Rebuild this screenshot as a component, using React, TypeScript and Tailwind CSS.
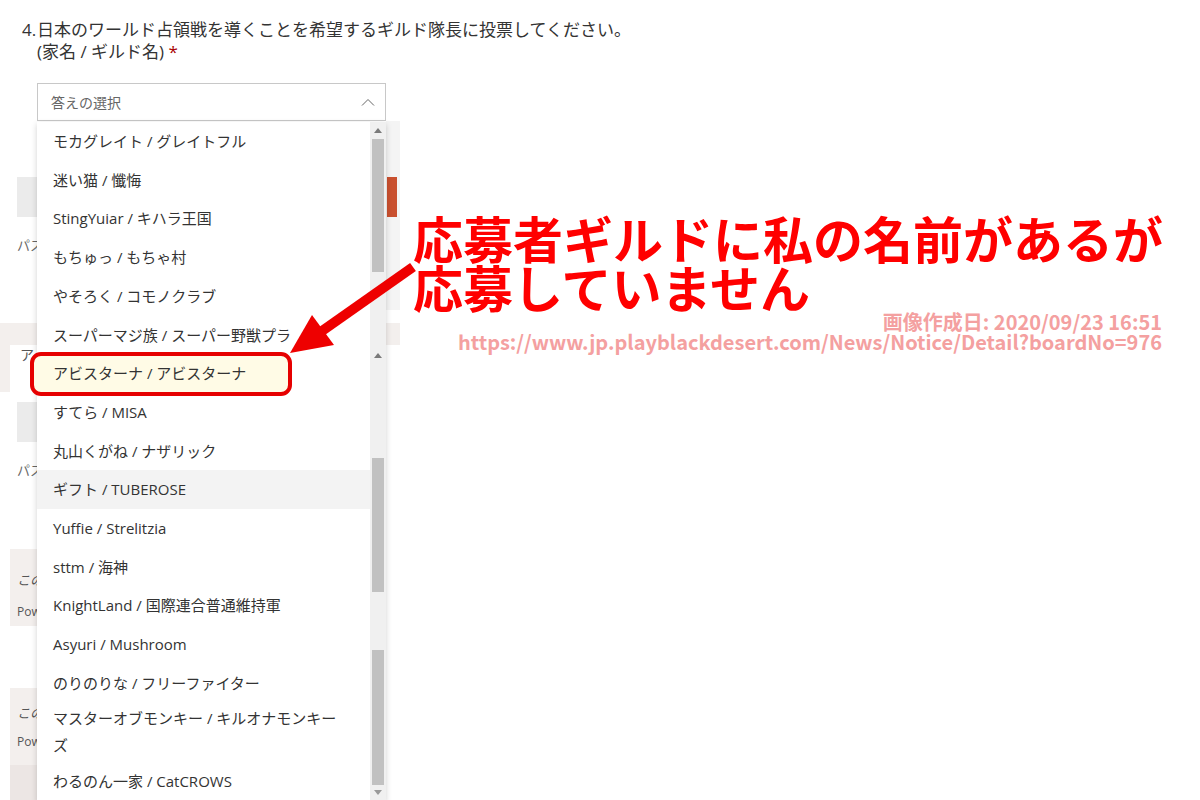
import React from "react";

const items: { label: React.ReactNode; tall?: boolean; hover?: boolean; mark?: boolean }[] = [
  { label: "モカグレイト / グレイトフル" },
  { label: "迷い猫 / 懺悔" },
  { label: "StingYuiar / キハラ王国" },
  { label: "もちゅっ / もちゃ村" },
  { label: "やそろく / コモノクラブ" },
  { label: "スーパーマジ族 / スーパー野獣プラ" },
  { label: "アビスターナ / アビスターナ", mark: true },
  { label: "すてら / MISA" },
  { label: "丸山くがね / ナザリック" },
  { label: "ギフト / TUBEROSE", hover: true },
  { label: "Yuffie / Strelitzia" },
  { label: "sttm / 海神" },
  { label: "KnightLand / 国際連合普通維持軍" },
  { label: "Asyuri / Mushroom" },
  { label: "のりのりな / フリーファイター" },
  {
    label: (
      <>
        マスターオブモンキー / キルオナモンキー
        <br />ズ
      </>
    ),
    tall: true,
  },
  { label: "わるのん一家 / CatCROWS" },
];

function ArrowUp() {
  return (
    <svg width="8" height="5" viewBox="0 0 8 5">
      <polygon points="0,5 4,0 8,5" fill="#7a7a7a" />
    </svg>
  );
}

function ArrowDown() {
  return (
    <svg width="8" height="5" viewBox="0 0 8 5">
      <polygon points="0,0 8,0 4,5" fill="#9a9a9a" />
    </svg>
  );
}

function Scrollbar() {
  return (
    <div className="w-[16px] flex flex-col bg-[#f0f0f0]">
      <div className="h-[17px] flex items-center justify-center">
        <ArrowUp />
      </div>
      <div className="h-[133px] mx-[2px] bg-[#c1c1c1]" />
      <div className="h-[73px]" />
      <div className="h-[20px] flex items-center justify-center">
        <ArrowUp />
      </div>
      <div className="h-[93px]" />
      <div className="h-[134px] mx-[2px] bg-[#c1c1c1]" />
      <div className="h-[58px]" />
      <div className="h-[135px] mx-[2px] bg-[#c1c1c1]" />
      <div className="h-[15px] flex items-center justify-center">
        <ArrowDown />
      </div>
    </div>
  );
}

function Dropdown() {
  return (
    <div className="absolute left-[37px] top-[122px] w-[349px] flex shadow-[0_2px_6px_rgba(0,0,0,0.18)]">
      <div className="w-[333px] bg-white">
        {items.map((it, i) => (
          <div
            key={i}
            className={
              (it.tall ? "h-[60px] pt-[3px] leading-[27px] " : "h-[38.7px] flex items-center ") +
              (it.hover ? "bg-[#f3f3f3] " : "") +
              "relative pl-[16px] text-[15px] text-[#333]"
            }
          >
            {it.mark && (
              <div className="absolute left-[-7px] top-[-2px] w-[262px] h-[44px] rounded-[11px] border-4 border-[#e60000] bg-[#fffbe6]" />
            )}
            <span className="relative">{it.label}</span>
          </div>
        ))}
      </div>
      <Scrollbar />
    </div>
  );
}

// only the left sliver of the page behind the list is visible
function Peek({ children, className }: { children: React.ReactNode; className: string }) {
  return <div className={"w-[20px] overflow-hidden whitespace-nowrap " + className}>{children}</div>;
}

function Background() {
  return (
    <div className="w-[400px] shrink-0">
      <div className="ml-[37px] mt-[20px] w-[349px] h-[38px] border border-[#c8c8c8] bg-white flex items-center justify-between pl-[13px] pr-[10px] text-[14px] text-[#666]">
        <span>答えの選択</span>
        <svg width="14" height="8" viewBox="0 0 14 8">
          <polyline points="1,7.5 7,1.5 13,7.5" fill="none" stroke="#666" strokeWidth="1" />
        </svg>
      </div>

      <div className="flex h-[189px]">
        <div className="w-[386px]">
          <div className="mt-[56px] ml-[17px] w-[120px] h-[40px] bg-[#ebebeb]" />
          <Peek className="mt-[19px] ml-[17px] text-[13px] leading-[18px] text-[#666]">パス</Peek>
        </div>
        <div className="w-[14px] bg-[#f4f4f4] pt-[56px]">
          <div className="ml-[1px] w-[10px] h-[40px] bg-[#c9502f]" />
        </div>
      </div>

      <div className="mt-[13px] h-[22px] bg-[#f3efed]" />
      <div className="flex h-[47px]">
        <div className="w-[10px] bg-[#f3efed]" />
        <Peek className="ml-[10px] pt-[1px] text-[14px] leading-[18px] text-[#555]">ア</Peek>
      </div>

      <div className="mt-[10px] ml-[17px] w-[120px] h-[40px] bg-[#ebebeb]" />
      <Peek className="mt-[19px] ml-[17px] text-[13px] leading-[18px] text-[#666]">パス</Peek>

      <div className="mt-[70px] ml-[10px] w-[370px] h-[77px] bg-[#f3efed] pl-[7px] pt-[22px] text-[#555]">
        <Peek className="text-[13px] leading-[18px] italic">この</Peek>
        <Peek className="mt-[14px] text-[12px] leading-[18px]">Pow</Peek>
      </div>

      <div className="mt-[62px] ml-[10px] w-[370px] h-[77px] bg-[#f3efed] pl-[7px] pt-[16px] text-[#555]">
        <Peek className="text-[13px] leading-[18px] italic">この</Peek>
        <Peek className="mt-[11px] text-[12px] leading-[18px]">Pow</Peek>
      </div>
      <div className="ml-[10px] w-[370px] h-[40px] bg-[#ece6e4]" />
    </div>
  );
}

function Annotation() {
  return (
    <div className="flex-1 pt-[150px]">
      <div className="pl-[13px] text-[50px] leading-[49px] font-bold text-[#ff0000] font-['Noto_Sans_CJK_JP',sans-serif]">
        応募者ギルドに私の名前があるが
        <br />
        応募していません
      </div>
      <div className="pr-[38px] mt-[1px] text-right text-[20px] leading-[20px] font-bold text-[#f4a0a0] font-['Noto_Sans_CJK_JP',sans-serif]">
        画像作成日: 2020/09/23 16:51
        <br />
        https://www.jp.playblackdesert.com/News/Notice/Detail?boardNo=976
      </div>
    </div>
  );
}

export default function App() {
  return (
    <div className="relative w-[1200px] h-[800px] overflow-hidden bg-white font-['Open_Sans','Noto_Sans_CJK_JP',sans-serif]">
      <div className="pt-[19px] pl-[22px] text-[17px] leading-[22px] text-[#333] flex">
        <span className="w-[15px] shrink-0">4.</span>
        <div>
          日本のワールド占領戦を導くことを希望するギルド隊長に投票してください。
          <br />
          (家名 / ギルド名) <span className="text-[#a80000]">*</span>
        </div>
      </div>
      <div className="flex">
        <Background />
        <Annotation />
      </div>
      <Dropdown />
      <svg className="absolute left-0 top-0 pointer-events-none" width="1200" height="800">
        <line x1="413" y1="267" x2="322" y2="331" stroke="#ee0000" strokeWidth="10" />
        <polygon points="290,353 312,315 334,345" fill="#ee0000" />
      </svg>
    </div>
  );
}
